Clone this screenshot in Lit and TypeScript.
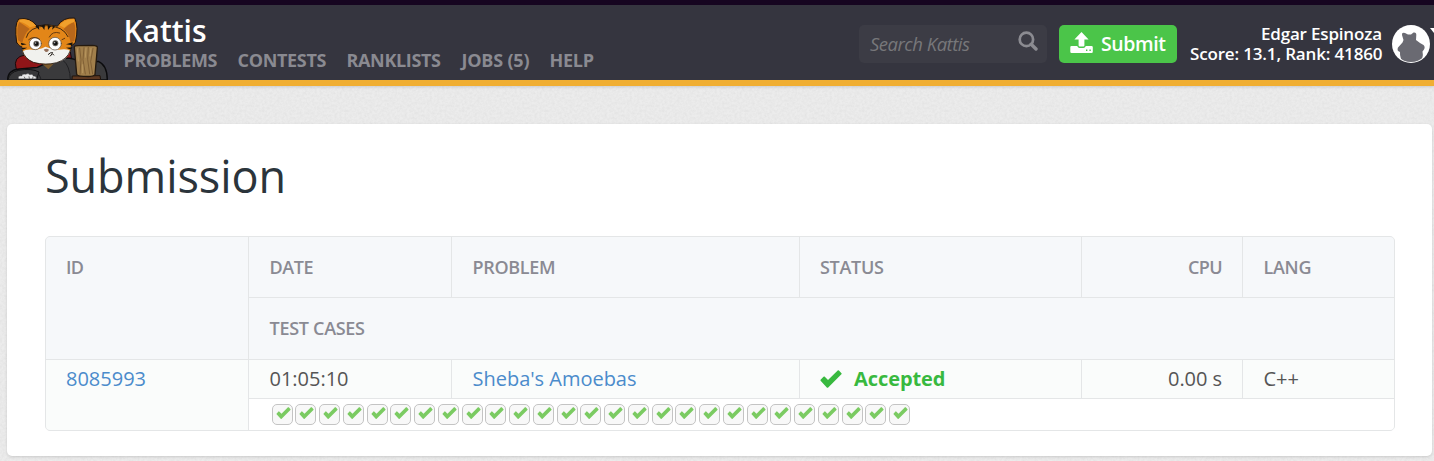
import { LitElement, html, css, svg } from "lit";
import { customElement } from "lit/decorators.js";

const NAV = [
  { label: "PROBLEMS", width: 94 },
  { label: "CONTESTS", width: 89 },
  { label: "RANKLISTS", width: 94.5 },
  { label: "JOBS (5)", width: 68 },
  { label: "HELP", width: 44.5 },
];

const TEST_CASES = 27;

const check = svg`<path d="M4.2 6.4L7.6 9.8L17 .5Q17.6 0 18.2 .5L20.7 3.2Q21.1 3.7 20.6 4.2L7.8 17.1Q7.1 17.7 6.4 17L.4 10.4Q0 9.8 .6 9.3L3.2 6.6Q3.7 6 4.2 6.4Z"/>`;

@customElement("kattis-mascot")
export class KattisMascot extends LitElement {
  static styles = css`
    :host { display: block; width: 101px; height: 63px; }
    svg { display: block; }
  `;
  render() {
    return html`<svg width="101" height="63" viewBox="21 51 303 189" stroke-linejoin="round" stroke-linecap="round">
      <path d="M48 205Q38 170 76 165L210 150L222 220L70 220Z" fill="#8f1518" stroke="#15090b" stroke-width="3"/>
      <path d="M23 240Q23 210 58 207L112 202L150 184Q170 172 195 174Q225 174 240 188L295 184Q322 195 322 240Z" fill="#3a3a3c" stroke="#0b0b0d" stroke-width="4"/>
      <path d="M105 212Q122 225 124 239M190 182Q210 197 211 239" fill="none" stroke="#202023" stroke-width="3"/>
      <path d="M127 192L145 208L160 192Z" fill="#7b5a2c"/>
      <path d="M50 128Q42 73 56 57Q90 50 111 78L140 74L172 79Q188 51 224 54Q237 80 226 127Q219 137 207 140L70 143Q56 139 50 128Z" fill="#e38618" stroke="#20140c" stroke-width="3"/>
      <path d="M54 121Q48 82 58 66Q74 76 89 87Q73 101 67 129ZM223 123Q230 80 221 66Q202 75 190 88Q206 98 212 127Z" fill="#b8671a"/>
      <path d="M59 59Q87 54 107 77L90 82Q76 68 59 65ZM223 58Q196 54 178 76L193 83Q207 69 222 66Z" fill="#f0a02c"/>
      <path d="M77 113Q85 80 139 76Q194 78 206 113Q222 150 200 172Q172 192 139 192Q101 191 76 171Q56 148 77 113Z" fill="#e38618"/>
      <path d="M67 154Q80 146 106 150L127 145L136 140L150 145L176 149Q206 145 211 154Q201 182 168 189Q134 196 100 187Q76 177 67 154Z" fill="#f1f1ee"/>
      <path d="M79 112Q85 82 139 77Q190 78 204 110M67 152Q74 176 100 187Q136 197 170 188Q201 179 211 152" fill="none" stroke="#20140c" stroke-width="2.5"/>
      <g fill="#17130d">
        <path d="M106 79L116 76L118 90ZM123 76L135 74L133 90ZM143 75L154 77L144 90ZM159 78L166 80L156 89ZM62 128L80 133L65 136ZM64 143L82 143L68 149ZM218 127L198 133L217 136ZM217 142L198 143L213 149Z"/>
      </g>
      <ellipse cx="106" cy="131" rx="18" ry="18" fill="#fff" stroke="#554535" stroke-width="2"/>
      <ellipse cx="165" cy="131" rx="19" ry="19" fill="#fff" stroke="#554535" stroke-width="2"/>
      <circle cx="109" cy="131" r="9" fill="#6a6660"/><circle cx="166" cy="130" r="9" fill="#6a6660"/>
      <circle cx="109" cy="131" r="6" fill="#111"/><circle cx="166" cy="130" r="6" fill="#111"/>
      <circle cx="107" cy="129" r="2" fill="#ddd"/><circle cx="164" cy="128" r="2" fill="#ddd"/>
      <path d="M86 119Q101 106 119 118M148 111Q157 92 179 99M186 119L194 115" fill="none" stroke="#4b2a0e" stroke-width="2.5"/>
      <path d="M131 149Q139 143 147 149Q144 158 137 156Z" fill="#94705b"/>
      <path d="M145 163Q151 156 158 158M151 168L157 161L161 165" fill="none" stroke="#18120d" stroke-width="3"/>
      <path d="M24 239Q29 216 56 211Q95 204 117 216L110 239Z" fill="#373739" stroke="#121214" stroke-width="3"/>
      <path d="M55 236Q54 225 65 228Q67 220 77 223Q85 218 89 224Q98 220 100 228Q110 227 109 236Z" fill="#e9e9e9" stroke="#18181a" stroke-width="1"/>
      <path d="M73 231L75 235M87 230L88 235M99 231L98 235" stroke="#333" stroke-width="2"/>
      <path d="M218 228L300 227L302 239L217 239Z" fill="#5e3921" stroke="#20140c" stroke-width="3"/>
      <path d="M223 142Q222 136 239 137L277 136Q294 137 292 144L285 224Q279 231 255 229Q233 230 230 223Z" fill="#a17f4b" stroke="#251a0f" stroke-width="4"/>
      <path d="M239 144L243 179L240 223M252 143L249 179L256 222M265 142L263 178L269 222M279 145L272 185L278 222" fill="none" stroke="#7a5930" stroke-width="2.5"/>
      <path d="M232 146L235 183M258 144L256 172M273 145L270 168M248 194L248 218" fill="none" stroke="#b8965e" stroke-width="3"/>
    </svg>`;
  }
}

@customElement("app-root")
export class AppRoot extends LitElement {
  static styles = css`
    :host {
      display: block; height: 461px; overflow: hidden; color: #555;
      font: 20px/26px "Open Sans", sans-serif;
      background: #ececec url("data:image/svg+xml,%3Csvg xmlns='http://www.w3.org/2000/svg' width='200' height='200'%3E%3Cfilter id='n'%3E%3CfeTurbulence type='fractalNoise' baseFrequency='.4' numOctaves='3' stitchTiles='stitch'/%3E%3CfeColorMatrix values='0 0 0 0 .5 0 0 0 0 .5 0 0 0 0 .5 .3 0 0 0 -.09'/%3E%3C/filter%3E%3Crect width='200' height='200' filter='url(%23n)'/%3E%3C/svg%3E");
    }
    * { box-sizing: border-box; }
    text { white-space: pre; }
    .fit { display: block; overflow: visible; fill: currentColor; }
    .header {
      height: 86px; border-top: 5px solid #160520; border-bottom: 6px solid #f0ae32;
      background: #35353f; display: flex; padding-left: 7px; box-shadow: 0 1px 3px #0002;
    }
    kattis-mascot { margin-top: 12px; }
    .brand { margin-left: 15px; width: 480px; padding-top: 9px; }
    .brand text, .in text { transform: translateX(.5px); }
    .name { color: #fff; font-size: 30px; font-weight: 600; line-height: 34px; height: 34px; }
    .nav { display: flex; gap: 20px; color: #8a8a91; font-size: 18px; font-weight: 700; line-height: 24px; }
    .tools { margin-left: auto; display: flex; padding-top: 20px; }
    .search {
      width: 188px; height: 38px; border-radius: 5px; background: #3c3c45; color: #77777a;
      display: flex; justify-content: space-between; padding: 0 9px 0 11px; font-style: italic; font-size: 18.5px; line-height: 38px;
    }
    .search-icon { margin-top: 6px; }
    .submit {
      width: 118px; height: 38px; margin-left: 12px; border-radius: 5px; background: #4bc549; color: #fff;
      display: flex; gap: 8px; padding-left: 11px; font-size: 19.5px; font-weight: 600; line-height: 38px;
    }
    .submit-icon { margin-top: 7px; }
    .user { width: 193px; margin: -1px 10px 0 12px; color: #fff; font-size: 17px; font-weight: 600; line-height: 20px; display: flex; flex-direction: column; align-items: flex-end; }
    .avatar { display: block; margin-right: 4px; }
    .pointer { position: absolute; top: 28px; right: 0; width: 4px; height: 5px; background: #fff; clip-path: polygon(0 0, 100% 0, 100% 100%); }
    .panel { width: 1425px; height: 332px; margin: 38px 0 0 7px; padding: 22px 37px 0 38px; background: #fff; border-radius: 5px; box-shadow: 0 1px 3px #0002; }
    .title { margin: 0 0 26px; height: 64px; color: #2b343b; font-size: 45px; font-weight: 370; line-height: 62px; }
    .table {
      display: grid; grid-template-columns: 202px 202px 347px 281px 160px 151px; grid-template-rows: 60px 61px 38px 31px;
      gap: 1px; border: 1px solid #e4e6e7; border-radius: 5px; background: #e4e6e7; overflow: hidden;
    }
    .th { background: #f6f8fa; color: #8a8a93; font-size: 18px; font-weight: 600; padding: 18px 20px; }
    .td { background: #fafcfb; padding: 7px 20px; }
    .tall { grid-row: span 2; }
    .wide { grid-column: span 5; }
    .right { display: flex; justify-content: flex-end; }
    .link { color: #4b8bcb; }
    .status { display: flex; gap: 12px; color: #38b93f; font-weight: 700; }
    .status-icon { margin-top: 3px; }
    .cases { background: #fff; display: flex; gap: 2.76px; padding: 5px 0 0 22.6px; }
    .case { flex: none; width: 21px; height: 21px; border: 1px solid #c4c4c4; border-radius: 5px; background: #f8f8f8; padding: 2px 0 0 3px; }
    .case svg { display: block; }
  `;

  private fit(label: string, width: number, baseline = 19, height = 26) {
    return html`<svg class="fit" width=${width} height=${height}><text x="0" y=${baseline} textLength=${width}>${label}</text></svg>`;
  }

  render() {
    return html`
      <header class="header">
        <kattis-mascot></kattis-mascot>
        <div class="brand">
          <div class="name">${this.fit("Kattis", 83, 28, 34)}</div>
          <nav class="nav">${NAV.map((n) => this.fit(n.label, n.width, 19, 24))}</nav>
        </div>
        <div class="tools">
          <div class="search">
            ${this.fit("Search Kattis", 100, 26, 38)}
            <svg class="search-icon" width="20" height="20" viewBox="0 0 20 20" fill="none" stroke="#8b8b91"><circle cx="8.4" cy="8.4" r="6.7" stroke-width="2.7"/><path d="M13.2 13.2L18 18" stroke-width="3.4" stroke-linecap="round"/></svg>
          </div>
          <div class="submit">
            <svg class="submit-icon" width="23" height="22" viewBox="0 0 23 22" fill="#fff"><path d="M11.5 0L18.6 7.6H14.4V13.5Q14.4 14.5 13.4 14.5H9.6Q8.6 14.5 8.6 13.5V7.6H4.4Z"/><path fill-rule="evenodd" d="M1.5 14H7.2Q8 16 9.6 16H13.4Q15 16 15.8 14H21.5Q22.8 14 22.8 15.3V19.8Q22.8 21 21.5 21H1.5Q.3 21 .3 19.8V15.3Q.3 14 1.5 14ZM16 17.4V18.9H17.4V17.4ZM19.4 17.4V18.9H20.8V17.4Z"/></svg>
            ${this.fit("Submit", 65, 26, 38)}
          </div>
          <div class="user">${this.fit("Edgar Espinoza", 121, 16, 20)}${this.fit("Score: 13.1, Rank: 41860", 192.5, 16, 20)}</div>
          <svg class="avatar" width="38" height="38" viewBox="0 0 38 38">
            <defs><clipPath id="disc"><circle cx="19" cy="19" r="18"/></clipPath><filter id="soft"><feGaussianBlur stdDeviation=".7"/></filter></defs>
            <circle cx="19" cy="19" r="19" fill="#fff"/>
            <g clip-path="url(#disc)"><path filter="url(#soft)" fill="#6a6a72" d="M10 10Q9.5 7 13 8L16 9.5H19L21.5 7.5Q24.5 7 24.3 10L24 15L28 18L31.5 20Q33.5 22 32 24.5L30.5 26.5Q32 33 27 39H12Q7.5 33 8 27Q4.5 26 6 22.5L10.5 17.5L11.5 15Z"/></g>
          </svg>
          <span class="pointer"></span>
        </div>
      </header>
      <main class="panel">
        <h1 class="title">${this.fit("Submission", 241, 47, 64)}</h1>
        <div class="table">
          <div class="th tall">${this.fit("ID", 18)}</div>
          <div class="th in">${this.fit("DATE", 44)}</div>
          <div class="th in">${this.fit("PROBLEM", 83)}</div>
          <div class="th">${this.fit("STATUS", 64)}</div>
          <div class="th right">${this.fit("CPU", 34.5)}</div>
          <div class="th in">${this.fit("LANG", 48)}</div>
          <div class="th in wide">${this.fit("TEST CASES", 95.5)}</div>
          <div class="td tall link">${this.fit("8085993", 80)}</div>
          <div class="td in">${this.fit("01:05:10", 79)}</div>
          <div class="td in link">${this.fit("Sheba's Amoebas", 164)}</div>
          <div class="td status"><svg class="status-icon" width="22" height="18" viewBox="0 0 21 17.5">${svg`<g fill="#38b93f">${check}</g>`}</svg>${this.fit("Accepted", 91.5)}</div>
          <div class="td right">${this.fit("0.00 s", 54)}</div>
          <div class="td in">${this.fit("C++", 35.5)}</div>
          <div class="cases wide">${Array.from({ length: TEST_CASES }, () => html`<div class="case"><svg width="15" height="12" viewBox="0 0 21 17.5" fill="#7bcb62">${check}</svg></div>`)}</div>
        </div>
      </main>`;
  }
}
